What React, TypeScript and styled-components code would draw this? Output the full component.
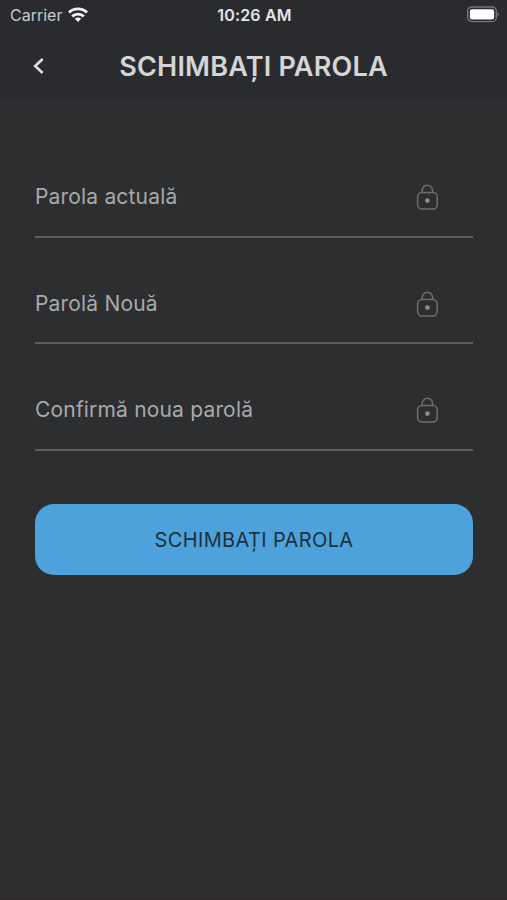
import React from "react";
import styled, { createGlobalStyle } from "styled-components";

const GlobalStyle = createGlobalStyle`
  * { box-sizing: border-box; }
  body { margin: 0; background: #2d2e30; }
`;

const Screen = styled.main`
  display: flex;
  flex-direction: column;
  width: 507px;
  height: 900px;
  overflow: hidden;
  background: #2d2e30;
  border-bottom: 1px solid #30262c;
  font-family: Inter, "Liberation Sans", sans-serif;
`;

const Top = styled.div`
  height: 105px;
  background: linear-gradient(#2a2b2e 96px, #2d2e30 105px);
`;

const StatusBar = styled.div`
  display: grid;
  grid-template-columns: 1fr auto 1fr;
  align-items: center;
  height: 30px;
  padding: 0 8px 0 10px;
`;

const Carrier = styled.div`
  display: flex;
  align-items: center;
  gap: 6px;
  color: #c9cacc;
  font-size: 16px;
  line-height: 20px;
`;

const Time = styled.time`
  color: #e6e6e7;
  font-size: 16px;
  font-weight: 600;
  line-height: 20px;
  letter-spacing: 0.2px;
`;

const BatterySlot = styled.div`
  display: flex;
  justify-content: flex-end;
  padding-bottom: 1px;
`;

const Header = styled.header`
  display: grid;
  grid-template-columns: 60px 1fr 60px;
  align-items: center;
  height: 72px;
`;

const BackButton = styled.button`
  display: flex;
  align-items: center;
  padding: 0 0 0 32px;
  border: 0;
  background: none;
`;

const Title = styled.h1`
  margin: 0;
  padding-top: 1px;
  color: #d5d5d6;
  font-size: 27px;
  font-weight: 600;
  line-height: 34px;
  letter-spacing: 0.2px;
  text-align: center;
  white-space: nowrap;
`;

const Form = styled.form`
  display: flex;
  flex-direction: column;
  padding: 51px 34px 0 35px;
`;

const Field = styled.label`
  display: flex;
  align-items: flex-start;
  justify-content: space-between;
  height: 82px;
  margin-bottom: 24.4px;
  padding: 26.2px 34px 0 0;
  border-bottom: 2px solid #5e5f61;
`;

const FieldName = styled.span`
  color: #a8a9ab;
  font-size: 21px;
  line-height: 30px;
  letter-spacing: 0.18px;
`;

const SubmitButton = styled.button`
  height: 71px;
  margin-top: 28.8px;
  padding: 1px 0 0;
  border: 0;
  border-radius: 19px;
  background: #4da2db;
  color: #1d313f;
  font-family: inherit;
  font-size: 20px;
  font-weight: 400;
  line-height: 28px;
  letter-spacing: 0.36px;
`;

const WifiIcon = () => (
  <svg width="20" height="16" viewBox="0 0 20 16" fill="none" stroke="#f2f2f3" strokeWidth="2.9">
    <path d="M1 5.5C6 0.7 14 0.7 19 5.5" />
    <path d="M4.2 9.4C7.4 6.4 12.6 6.4 15.8 9.4" />
    <path d="M10 15L6.9 11.8C8.6 10.2 11.4 10.2 13.1 11.8Z" fill="#f2f2f3" stroke="none" />
  </svg>
);

const BatteryIcon = () => (
  <svg width="33" height="17" viewBox="0 0 33 17">
    <rect x="1.7" y="1" width="28.6" height="14.6" rx="4.2" fill="none" stroke="#77787a" strokeWidth="1.4" />
    <rect x="3.9" y="3.2" width="24.2" height="10.2" rx="2.2" fill="#fff" />
    <path d="M31.5 6v4.6c1.7-.8 1.7-3.8 0-4.6Z" fill="#77787a" />
  </svg>
);

const ChevronIcon = () => (
  <svg width="13" height="18" viewBox="0 0 13 18" fill="none" stroke="#dededf" strokeWidth="2.7">
    <path d="M10.6 2L3.2 9L10.6 16" />
  </svg>
);

const LockIcon = () => (
  <svg width="24" height="30" viewBox="0 0 24 30" fill="none" stroke="#6e6f71" strokeWidth="1.5">
    <rect x="2.6" y="10.6" width="19.6" height="16.4" rx="4.4" />
    <path d="M7.2 10.6V8.4a5.2 5.2 0 0 1 10.4 0v2.2" />
    <circle cx="12.4" cy="18.6" r="2.3" fill="#8d8e90" stroke="none" />
  </svg>
);

const fields = ["Parola actuală", "Parolă Nouă", "Confirmă noua parolă"];

export default function App() {
  return (
    <>
      <GlobalStyle />
      <Screen>
        <Top>
          <StatusBar>
            <Carrier>
              Carrier
              <WifiIcon />
            </Carrier>
            <Time>10:26 AM</Time>
            <BatterySlot>
              <BatteryIcon />
            </BatterySlot>
          </StatusBar>
          <Header>
            <BackButton type="button" aria-label="Înapoi">
              <ChevronIcon />
            </BackButton>
            <Title>SCHIMBAȚI PAROLA</Title>
          </Header>
        </Top>
        <Form>
          {fields.map((name) => (
            <Field key={name}>
              <FieldName>{name}</FieldName>
              <LockIcon />
            </Field>
          ))}
          <SubmitButton type="button">SCHIMBAȚI PAROLA</SubmitButton>
        </Form>
      </Screen>
    </>
  );
}
